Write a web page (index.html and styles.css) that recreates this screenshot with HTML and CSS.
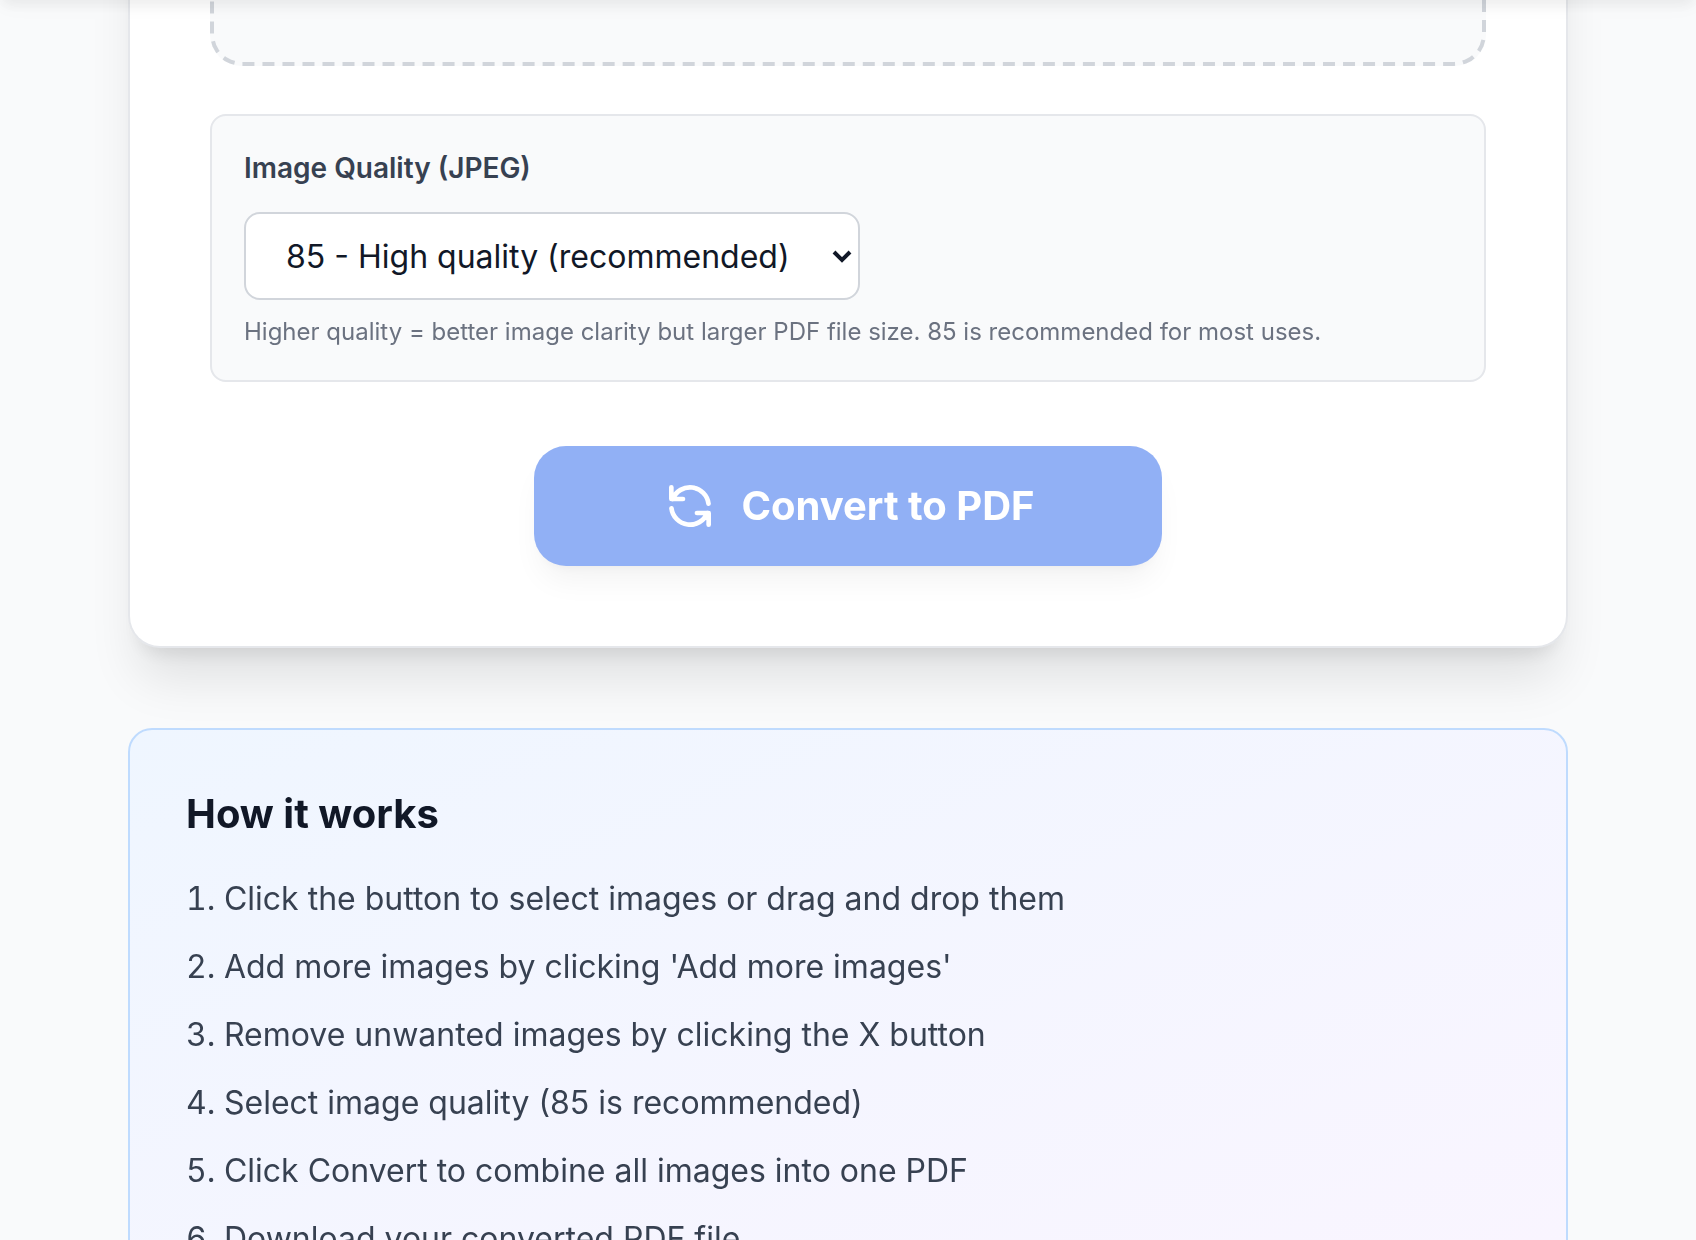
FILE: index.html
```
<!DOCTYPE html>
<html lang="en">
  <head>
    <meta charset="UTF-8" />
    <meta name="viewport" content="width=device-width, initial-scale=1.0" />
    <title>Images to PDF</title>
    <link rel="stylesheet" href="styles.css">
  </head>
  <body>
    <div class="page">
      <header class="site-header"></header>
      <main>
        <section class="converter">
          <div class="dropzone"></div>
          <div class="settings">
            <label for="quality">Image Quality (JPEG)</label>
            <select id="quality" name="quality">
              <option value="85" selected>85 - High quality (recommended)</option>
            </select>
            <p class="hint">Higher quality = better image clarity but larger PDF file size. 85 is recommended for most uses.</p>
          </div>
          <button class="convert-btn" type="button" disabled>
            <svg viewBox="0 0 24 24" fill="none" stroke="currentColor" stroke-width="2" stroke-linecap="round" stroke-linejoin="round">
              <path d="M4 4v5h.582m15.356 2A8.001 8.001 0 004.582 9m0 0H9m11 11v-5h-.581m0 0a8.003 8.003 0 01-15.357-2m15.357 2H15" />
            </svg>
            <span>Convert to PDF</span>
          </button>
        </section>

        <section class="how-it-works">
          <h2>How it works</h2>
          <ol>
            <li>Click the button to select images or drag and drop them</li>
            <li>Add more images by clicking 'Add more images'</li>
            <li>Remove unwanted images by clicking the X button</li>
            <li>Select image quality (85 is recommended)</li>
            <li>Click Convert to combine all images into one PDF</li>
            <li>Download your converted PDF file</li>
          </ol>
        </section>
      </main>
    </div>
  </body>
</html>
```
FILE: styles.css
```
/* Global Styles */
* {
  box-sizing: border-box;
}

body {
  margin: 0;
  height: 1240px;
  overflow: hidden;
  background: #f9fafb;
}

/* everything is laid out at half size and shown at 200% */
.page {
  position: relative;
  width: 848px;
  height: 620px;
  overflow: hidden;
  transform: scale(2);
  transform-origin: 0 0;
  font-family: "Inter", sans-serif;
  font-size: 16px;
  line-height: 24px;
  color: #111827;
}

/* only the shadow of the header reaches into the page */
.site-header {
  position: absolute;
  top: -64px;
  left: 0;
  right: 0;
  height: 64px;
  box-shadow: 0 4px 6px -1px rgba(0, 0, 0, 0.05), 0 2px 12px rgba(0, 0, 0, 0.03);
  z-index: 10;
}

main {
  width: 720px;
  margin: 0 auto;
}

.converter {
  padding: 0 40px 40px;
  background: #fff;
  border: 1px solid #e5e7eb;
  border-top: none;
  border-radius: 0 0 16px 16px;
  box-shadow: 0 20px 25px -5px rgba(0, 0, 0, 0.1), 0 8px 10px -6px rgba(0, 0, 0, 0.1);
}

.dropzone {
  height: 300px;
  margin-top: -267px;
  border: 2px dashed #d1d5db;
  border-radius: 16px;
  background: #f9fafb;
}

.settings {
  margin-top: 24px;
  padding: 16px;
  background: #f9fafb;
  border: 1px solid #e5e7eb;
  border-radius: 8px;
}

.settings label {
  display: block;
  margin-bottom: 12px;
  font-size: 14px;
  line-height: 20px;
  font-weight: 600;
  color: #374151;
}

.settings select {
  display: block;
  width: 308px;
  height: 44px;
  padding: 0 16px;
  font-family: inherit;
  font-size: 16px;
  color: #111827;
  background: #fff;
  border: 1px solid #d1d5db;
  border-radius: 8px;
}

.hint {
  margin: 8px 0 0;
  font-size: 12px;
  line-height: 16px;
  color: #6b7280;
}

.convert-btn {
  display: flex;
  align-items: center;
  justify-content: center;
  gap: 12px;
  width: 314px;
  height: 60px;
  margin: 32px auto 0;
  padding: 0;
  font-family: inherit;
  font-size: 20px;
  line-height: 28px;
  font-weight: 700;
  color: #fff;
  background: #2563eb;
  border: none;
  border-radius: 16px;
  box-shadow: 0 10px 15px -3px rgba(0, 0, 0, 0.1), 0 4px 6px -4px rgba(0, 0, 0, 0.1);
  opacity: 0.5;
}

.convert-btn svg {
  width: 28px;
  height: 28px;
}

.how-it-works {
  margin-top: 40px;
  padding: 28px;
  background: linear-gradient(to bottom right, #eff6ff, #faf5ff);
  border: 1px solid #bfdbfe;
  border-radius: 12px;
}

.how-it-works h2 {
  margin: 0 0 16px;
  font-size: 20px;
  line-height: 28px;
  font-weight: 700;
}

.how-it-works ol {
  margin: 0;
  padding: 0;
  list-style: decimal inside;
  color: #374151;
}

.how-it-works li {
  margin-bottom: 10px;
}
```
